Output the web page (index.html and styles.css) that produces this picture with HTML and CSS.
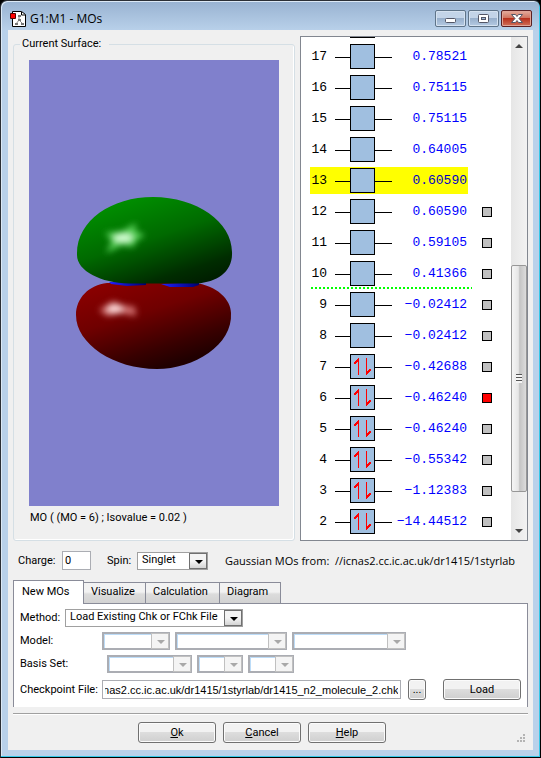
FILE: index.html
```
<!DOCTYPE html>
<html lang="en">
    <head>
        <meta charset="utf-8">
        <title>G1:M1 - MOs</title>
        <link rel="stylesheet" href="styles.css">
    </head>
    <body>
        <div class="window">
            <header class="titlebar">
                <svg class="app-icon" width="16" height="16" viewBox="0 0 16 16">
                    <path d="M2.500 .5h9l4 3v12h-13z" fill="#fff" stroke="#000"/>
                    <path d="M11.500 1v3h3.500" fill="none" stroke="#000"/>
                    <path d="M9 5v4M9 9l-3 4M9 9l4 4" stroke="#888" fill="none"/>
                    <path d="M8 4h3v2H8zM8 8h3v2H8zM5 12h3v2H5zM11 12h3v2h-3z" fill="#777"/>
                    <path d="M.5 2.500h5v5h-5z" fill="#f00" stroke="#500"/>
                </svg>
                <h1>G1:M1 - MOs</h1>
                <div class="controls">
                    <button class="ctl" aria-label="Minimize">
                        <svg width="30" height="17"><rect x="9.500" y="8.500" width="10" height="4" rx="1" fill="#fff" stroke="#535666"/></svg>
                    </button>
                    <button class="ctl" aria-label="Maximize">
                        <svg width="30" height="17"><rect x="9.500" y="4.500" width="10" height="8" rx="1" fill="#fff" stroke="#535666"/><rect x="12.500" y="7.500" width="4" height="2" fill="#9fb8d5" stroke="#535666"/></svg>
                    </button>
                    <button class="ctl close" aria-label="Close">
                        <svg width="30" height="17"><path d="M9.500 4.500h4l1.500 2 1.500-2h4l-3.500 4 3.500 4h-4l-1.500-2-1.500 2h-4l3.500-4z" fill="#fff" stroke="#535666"/></svg>
                    </button>
                </div>
            </header>

            <main class="client">
                <div class="top">
                    <fieldset class="surface">
                        <legend>Current Surface:</legend>
                        <div class="view">
                            <svg viewBox="0 0 250 446" width="100%" height="100%">
                                <defs>
                                    <linearGradient id="green" x1=".25" y1=".1" x2=".8" y2="1.050">
                                        <stop offset="0" stop-color="#008c00"/>
                                        <stop offset=".4" stop-color="#006a00"/>
                                        <stop offset=".8" stop-color="#002c00"/>
                                        <stop offset="1" stop-color="#001a00"/>
                                    </linearGradient>
                                    <linearGradient id="red" x1=".2" y1="0" x2=".7" y2=".9">
                                        <stop offset="0" stop-color="#8a0000"/>
                                        <stop offset=".4" stop-color="#700000"/>
                                        <stop offset=".8" stop-color="#380000"/>
                                        <stop offset="1" stop-color="#200000"/>
                                    </linearGradient>
                                    <linearGradient id="blue">
                                        <stop offset="0" stop-color="#2020ff"/>
                                        <stop offset="1" stop-color="#000070"/>
                                    </linearGradient>
                                    <filter id="soft" x="-50%" y="-50%" width="200%" height="200%"><feGaussianBlur stdDeviation="3"/></filter>
                                </defs>
                                <path fill="url(#red)" d="M78 223H165C188 225 202 240 202 253C204 285 165 309 128 309C85 309 47 284 47 255C47 238 60 225 78 223Z"/>
                                <path fill="url(#blue)" d="M80 222H117V225L98 226L82 224Z"/>
                                <path fill="url(#blue)" d="M132 224L170 222V225L164 227H141Z"/>
                                <path fill="url(#green)" d="M124 137C168 137 203 162 203 192C204 212 188 222 168 223.500H100C72 223 48 211 48 195C47 161 82 137 124 137Z"/>
                                <g filter="url(#soft)">
                                    <path fill="#58d058" d="M76 173L93 171L107 163L106 171L116 175L108 180L104 187L93 185L77 193L83 181Z"/>
                                    <ellipse cx="94" cy="178" rx="10" ry="4" fill="#d8ffd8"/>
                                    <path fill="#d07070" d="M70 250L84 241L93 245L106 247L107 256L92 253L78 256Z"/>
                                    <ellipse cx="86" cy="249" rx="8" ry="4" fill="#ffdcdc"/>
                                </g>
                            </svg>
                        </div>
                        <p>MO ( (MO = 6) ; Isovalue = 0.02 )</p>
                    </fieldset>

                    <section class="orbitals">
                        <div class="levels">
                            <table>
                                <tbody id="levels"></tbody>
                            </table>
                        </div>
                        <div class="scrollbar">
                            <i class="up"></i>
                            <div class="track"><div class="thumb"></div></div>
                            <i class="down"></i>
                        </div>
                    </section>
                </div>

                <div class="state">
                    <label class="for-charge" for="charge">Charge:</label>
                    <input type="text" id="charge" value="0">
                    <label class="for-spin" for="spin">Spin:</label>
                    <span class="combo spin"><select id="spin"><option>Singlet</option></select></span>
                    <p class="source">Gaussian MOs from:&nbsp; //icnas2.cc.ic.ac.uk/dr1415/1styrlab</p>
                </div>

                <nav class="tabs">
                    <button class="tab active">New MOs</button>
                    <button class="tab visualize">Visualize</button>
                    <button class="tab calculation">Calculation</button>
                    <button class="tab diagram">Diagram</button>
                </nav>
                <form class="panel">
                    <div class="line">
                        <label class="for-method" for="method">Method:</label>
                        <span class="combo method"><select id="method"><option>Load Existing Chk or FChk File</option></select></span>
                    </div>
                    <div class="line">
                        <label class="for-model" for="model">Model:</label>
                        <span class="combo off w68"><select id="model" disabled></select></span>
                        <span class="combo off w112"><select aria-label="Theory" disabled></select></span>
                        <span class="combo off w114"><select aria-label="Functional" disabled></select></span>
                    </div>
                    <div class="line">
                        <label class="for-basis" for="basis">Basis Set:</label>
                        <span class="combo off w85"><select id="basis" disabled></select></span>
                        <span class="combo off w46"><select aria-label="Diffuse" disabled></select></span>
                        <span class="combo off w46"><select aria-label="Polarization" disabled></select></span>
                    </div>
                    <div class="line file">
                        <label class="for-model" for="chk">Checkpoint File:</label>
                        <input type="text" id="chk" value="//icnas2.cc.ic.ac.uk/dr1415/1styrlab/dr1415_n2_molecule_2.chk">
                        <button type="button" class="btn browse">...</button>
                        <button type="button" class="btn">Load</button>
                    </div>
                </form>

                <footer class="actions">
                    <button class="btn"><u>O</u>k</button>
                    <button class="btn"><u>C</u>ancel</button>
                    <button class="btn"><u>H</u>elp</button>
                    <svg class="grip" width="8" height="8" fill="#b4b4b4"><path d="M6 0h2v2H6zM3 3h2v2H3zM6 3h2v2H6zM0 6h2v2H0zM3 6h2v2H3zM6 6h2v2H6z"/></svg>
                </footer>
            </main>
        </div>

        <script src="script.js"></script>
    </body>
</html>
```

FILE: styles.css
```
* {
    box-sizing: border-box;
}
body {
    margin: 0;
    background: #000;
    color: #000;
    font: 11px/16px Roboto, 'Liberation Sans', sans-serif;
}
p, h1 {
    margin: 0;
    font-weight: normal;
}
button, input, select {
    margin: 0;
    font: inherit;
    color: inherit;
}
label {
    flex: none;
    white-space: nowrap;
}

.window {
    display: flex;
    flex-direction: column;
    min-height: 100vh;
    padding: 0 7px 7px 6px;
    border: 1px solid #2b2f36;
    border-right-color: #000;
    border-bottom-color: #000;
    border-radius: 7px 7px 0 0;
    background: linear-gradient(#98b2d1, #b9d1ea 30px);
    box-shadow: inset -1px -1px #35c8e8, inset 1px 1px #dce9f6;
}

/* title bar */
.titlebar {
    display: flex;
    align-items: center;
    height: 29px;
    padding: 6px 1px 0 3px;
}
.titlebar h1 {
    flex: 1;
    padding-left: 4px;
    font: 12px/16px 'Open Sans', sans-serif;
}
.controls {
    display: flex;
    gap: 2px;
}
.ctl {
    width: 31px;
    height: 17px;
    padding: 0;
    overflow: hidden;
    border: 1px solid #5f7489;
    border-radius: 2px;
    background: linear-gradient(#c3d4e8 45%, #98b0cc 50%, #b4cae2);
    box-shadow: inset 0 0 0 1px #d5e2f0;
}
.ctl svg {
    display: block;
    margin-top: -1px;
}
.ctl.close {
    border-color: #5a1f22;
    background: linear-gradient(#e0a090 10%, #cf705c 48%, #b8301c 50%, #d0705a);
    box-shadow: inset 0 0 0 1px #e0a497;
}

.client {
    flex: 1;
    display: flex;
    flex-direction: column;
    margin-left: 1px;
    padding: 6px 5px 0;
    background: #f0f0f0;
}
.top {
    flex: 1;
    display: flex;
    gap: 5px;
    min-height: 300px;
}

/* surface viewer */
.surface {
    flex: 1;
    display: flex;
    flex-direction: column;
    min-width: 0;
    margin: 0;
    padding: 8px 14px 14px;
    border: 1px solid #d5dfe5;
    border-radius: 3px;
    box-shadow: inset -1px -1px #fff;
}
.surface legend {
    margin-left: -8px;
    padding: 0 8px 0 2px;
}
.view {
    flex: 1 1 0;
    min-height: 0;
    margin: 0 1px;
    background: #8080cc;
}
.view svg {
    display: block;
}
.surface p {
    margin-top: 4px;
    padding-left: 2px;
}

/* orbital energy levels */
.orbitals {
    display: flex;
    width: 228px;
    border: 1px solid #828790;
    background: #fff;
}
.levels {
    flex: 1;
    display: flex;
    flex-direction: column;
    justify-content: flex-end;
    overflow: hidden;
    contain: size;
    padding-bottom: 3px;
}
.levels table {
    width: 191px;
    table-layout: fixed;
    border-collapse: collapse;
    font: 13px/16px 'Liberation Mono', monospace;
}
.levels tr {
    height: 31px;
}
.levels td {
    padding: 0;
    text-align: right;
}
.levels .num {
    width: 26px;
}
.levels .orb {
    width: 65px;
    padding-left: 8px;
}
.levels .energy {
    width: 75px;
    color: #00f;
}
.levels svg {
    display: block;
}
.levels .current {
    background: linear-gradient(#ff0, #ff0) 9px 2px / 158px 27px no-repeat;
}
.levels .current .energy {
    color: #0000c8;
}
.levels .gap {
    background: repeating-linear-gradient(90deg, #0f0 0 2px, #fff 2px 4px) 10px 29px / 161px 2px no-repeat;
}
.levels input {
    display: block;
    appearance: none;
    width: 10px;
    height: 10px;
    margin-left: 15px;
    border: 1px solid #000;
    background: #c0c0c0;
}
.levels input:checked {
    background: #f00;
}

.scrollbar {
    display: flex;
    flex-direction: column;
    align-items: center;
    width: 16px;
    background: linear-gradient(90deg, #e6e6e6, #f2f2f2);
}
.up, .down {
    margin: 7px 0;
    border: 4px solid transparent;
}
.up {
    border-top: 0;
    border-bottom-color: #444;
}
.down {
    border-bottom: 0;
    border-top-color: #444;
}
.track {
    flex: 1;
    display: flex;
    flex-direction: column;
    justify-content: flex-end;
    width: 100%;
    padding-bottom: 30px;
}
.thumb {
    height: 52%;
    border: 1px solid #979797;
    border-radius: 2px;
    background:
        repeating-linear-gradient(#555 0 1px, #f5f5f5 1px 3px) 50% 50% / 6px 9px no-repeat,
        linear-gradient(90deg, #f5f5f5, #e6e6e6 45%, #c4c4c4 55%, #dcdcdc);
}

/* charge and spin */
.state {
    display: flex;
    align-items: center;
    height: 39px;
    padding: 0 6px 0 5px;
}
.for-charge {
    width: 44px;
}
.for-spin {
    width: 30px;
}
input[type=text] {
    width: 100%;
    height: 19px;
    padding: 0 2px;
    border: 1px solid #abadb3;
    outline: 0;
    background: #fff;
}
#charge {
    width: 29px;
    margin-right: 16px;
}
.combo {
    position: relative;
    display: block;
    height: 18px;
}
.combo select {
    display: block;
    appearance: none;
    width: 100%;
    height: 100%;
    padding: 0 18px 2px 4px;
    border: 1px solid #a0a0a0;
    border-radius: 0;
    outline: 0;
    background: #fff;
    line-height: 14px;
    opacity: 1;
}
.combo::before {
    content: '';
    position: absolute;
    top: 1px;
    right: 1px;
    bottom: 1px;
    width: 16px;
    border: 1px solid #707070;
    background: linear-gradient(#f4f4f4 50%, #d4d4d4);
    pointer-events: none;
}
.combo::after {
    content: '';
    position: absolute;
    top: 8px;
    right: 5px;
    border: 4px solid transparent;
    border-top-color: #000;
    border-bottom: 0;
    pointer-events: none;
}
.combo.off select {
    border: 2px solid #abadb3;
    box-shadow: inset 1px 1px #bcdcf8;
}
.combo.off::before {
    border-color: #c0c0c0;
    background: #f4f4f4;
}
.combo.off::after {
    border-top-color: #a8a8a8;
}
.combo.spin {
    width: 71px;
    margin-right: 17px;
}
.source {
    flex: 1;
    min-width: 0;
    overflow: hidden;
    white-space: nowrap;
    font: 11px/16px 'Open Sans', sans-serif;
}

/* tabs */
.tabs {
    display: flex;
    align-items: flex-end;
}
.tab {
    height: 21px;
    padding: 0 0 2px 7px;
    border: 1px solid #8a8c99;
    border-left: 0;
    border-bottom: 0;
    background: linear-gradient(#f2f2f2 45%, #dcdcdc 55%, #d2d2d2);
    text-align: left;
    line-height: 16px;
}
.tab.active {
    position: relative;
    width: 71px;
    height: 24px;
    margin-bottom: -1px;
    padding: 0 0 2px 8px;
    border-left: 1px solid #8a8c99;
    background: #fff;
}
.visualize {
    width: 62px;
}
.calculation {
    width: 74px;
}
.diagram {
    width: 61px;
}
.panel {
    display: flex;
    flex-direction: column;
    gap: 5px;
    padding: 5px 6px 6px;
    border: 1px solid #8a8c99;
    border-bottom: 0;
    background: #fff;
}
.line {
    display: flex;
    align-items: center;
    gap: 5px;
}
.for-method {
    width: 40px;
}
.for-model {
    width: 77px;
}
.for-basis {
    width: 82px;
}
.file {
    height: 23px;
}
.file input[type=text] {
    flex: 1;
    min-width: 0;
    font: 11px/16px 'Liberation Sans', sans-serif;
}
.method {
    width: 178px;
}
.w46 {
    width: 46px;
}
.w68 {
    width: 68px;
}
.w85 {
    width: 85px;
}
.w112 {
    width: 112px;
}
.w114 {
    width: 114px;
}

.btn {
    width: 78px;
    height: 21px;
    padding: 0;
    border: 1px solid #707070;
    border-radius: 3px;
    background: linear-gradient(#f2f2f2 45%, #dddddd 50%, #cfcfcf);
    box-shadow: inset 0 0 0 1px #fbfbfb;
    line-height: 16px;
}
.btn.browse {
    width: 18px;
    margin: 0 12px 0 2px;
}
.actions {
    position: relative;
    display: flex;
    justify-content: center;
    gap: 7px;
    margin-top: 6px;
    padding: 8px 17px 7px 0;
    border-top: 1px solid #a0a0a0;
    box-shadow: inset 0 1px #fff;
}
.grip {
    position: absolute;
    right: 3px;
    bottom: 8px;
}
```

FILE: script.js
```
// number, energy, electron pair, surface flag
var levels = [
    ["", "", false, false],
    [17, "0.78521", false, false],
    [16, "0.75115", false, false],
    [15, "0.75115", false, false],
    [14, "0.64005", false, false],
    [13, "0.60590", false, false],
    [12, "0.60590", false, true],
    [11, "0.59105", false, true],
    [10, "0.41366", false, true],
    [9, "-0.02412", false, true],
    [8, "-0.02412", false, true],
    [7, "-0.42688", true, true],
    [6, "-0.46240", true, true],
    [5, "-0.46240", true, true],
    [4, "-0.55342", true, true],
    [3, "-1.12383", true, true],
    [2, "-14.44512", true, true]
];
var arrows = '<path d="M23 21V8h-1v1h-1v1h-2V9l4-5h1v17zM31 4v17h1l4-5v-1h-2v1h-1v1h-1V4z" fill="#f00" shape-rendering="crispEdges"/>';

document.querySelector("#levels").innerHTML = levels.map(function (level) {
    var n = level[0];
    var cls = n == 13 ? "current" : n == 10 ? "gap" : "";
    return '<tr class="' + cls + '"><td class="num">' + n + '</td>' +
        '<td class="orb"><svg width="57" height="25">' +
        '<path d="M0 13.500h57" stroke="#000"/>' +
        '<rect x="15.500" y=".5" width="24" height="24" fill="#a0bfe0" stroke="#000"/>' +
        (level[2] ? arrows : "") + '</svg></td>' +
        '<td class="energy">' + level[1].replace("-", "\u2212") + '</td>' +
        '<td>' + (level[3] ? '<input type="checkbox" aria-label="Surface ' + n + '"' + (n == 6 ? " checked" : "") + '>' : "") + '</td></tr>';
}).join("");

// keep the end of the path in sight
var chk = document.querySelector("#chk");
chk.scrollLeft = chk.scrollWidth;
```
